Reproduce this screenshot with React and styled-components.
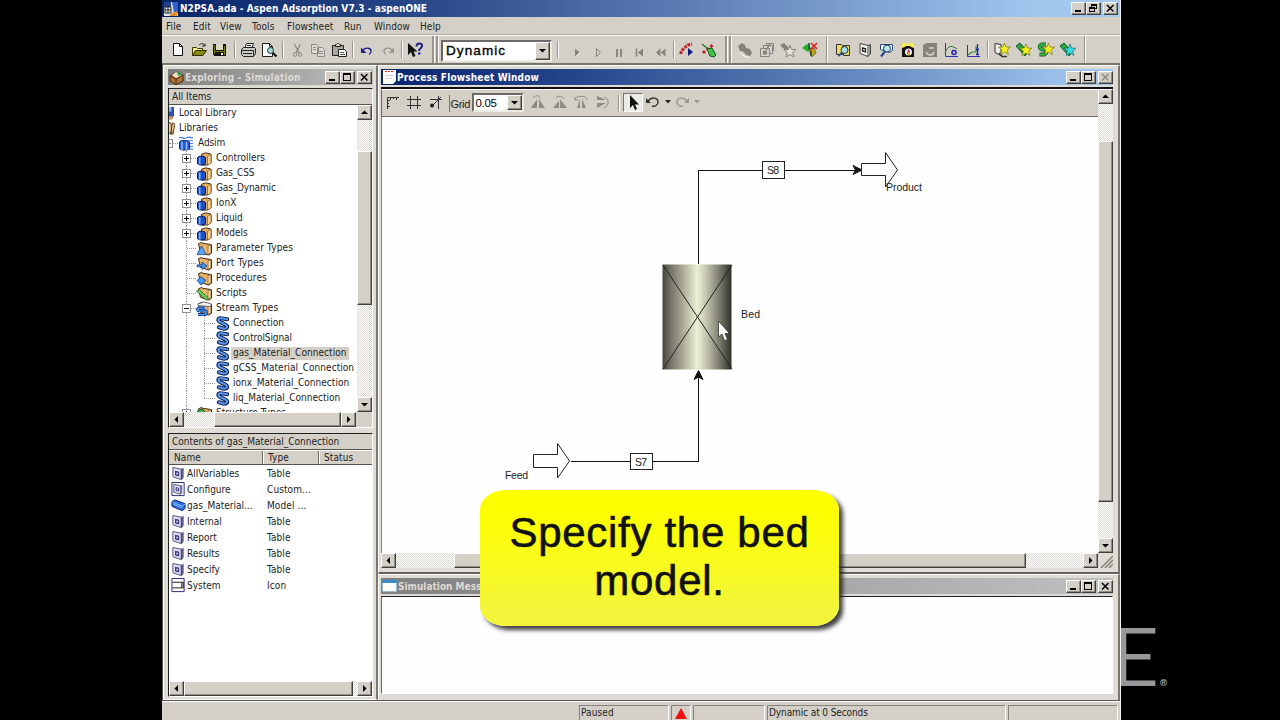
import React from 'react';
import styled, { createGlobalStyle, css } from 'styled-components';

const FACE = '#d4d0c8';
const UI = '"DejaVu Sans Condensed", "DejaVu Sans", "Liberation Sans", sans-serif';

const Global = createGlobalStyle`
  * { box-sizing: border-box; }
  html, body { margin: 0; background: #000; overflow: hidden; }
  svg { display: block; flex: none; }
`;

const Screen = styled.div`
  position: relative;
  width: 1280px;
  height: 720px;
  padding-left: 162px;
  display: flex;
  background: #000;
  overflow: hidden;
  font: 10px/15px ${UI};
  color: #222;
  white-space: nowrap;
`;

const AppWindow = styled.div`
  position: relative;
  z-index: 1;
  width: 959px;
  height: 720px;
  background: ${FACE};
  border-right: 1px solid #f4f4f0;
  display: flex;
  flex-direction: column;
`;

const Text = styled.span`
  letter-spacing: ${(p) => p.$track || 0}px;
`;

const gradients = {
  main: 'linear-gradient(90deg,#0a246a 0%,#2a4a8a 28%,#6a8cc0 62%,#a2c8f0 92%,#a6caf0 100%)',
  active: 'linear-gradient(90deg,#0a2470 0%,#23438a 25%,#5b7fb8 60%,#9fc5ee 95%)',
  idle: 'linear-gradient(90deg,#808080,#c0c0c0)',
};

const TitleBar = styled.div`
  height: ${(p) => p.$h || 16}px;
  flex: none;
  display: flex;
  align-items: center;
  padding: 0 ${(p) => p.$pr || 0}px 0 1px;
  background: ${(p) => gradients[p.$tone]};
  color: ${(p) => (p.$tone === 'idle' ? '#dedad2' : '#fff')};
  font-weight: bold;
  overflow: hidden;
`;

const TitleText = styled.span`
  flex: 1;
  margin-left: ${(p) => (p.$ml === undefined ? 1 : p.$ml)}px;
  letter-spacing: ${(p) => p.$track || 0}px;
`;

const bevel = css`
  background: ${FACE};
  border: 1px solid;
  border-color: #fff #404040 #404040 #fff;
  box-shadow: inset -1px -1px 0 #908c84;
`;

const CapButton = styled.span`
  ${bevel}
  width: 15px;
  height: 13px;
  margin-left: ${(p) => p.$gap || 0}px;
  display: flex;
  align-items: center;
  justify-content: center;
  color: ${(p) => (p.$dim ? '#8a8a86' : '#000')};
`;

function CapButtons({ restore, dim }) {
  return (
    <>
      <CapButton>
        <svg width="11" height="9" shapeRendering="crispEdges"><path d="M2 6h6v2H2z" /></svg>
      </CapButton>
      <CapButton>
        {restore ? (
          <svg width="11" height="9" shapeRendering="crispEdges">
            <path d="M3.5 3V0.5h5v4H7M3 1h6" fill="none" stroke="#000" />
            <path d="M1.5 3.5h5v4h-5zM1 4h6" fill="none" stroke="#000" />
          </svg>
        ) : (
          <svg width="11" height="9" shapeRendering="crispEdges">
            <path d="M1.5 .5h7v7h-7zM1 1.5h8" fill="none" stroke="#000" />
          </svg>
        )}
      </CapButton>
      <CapButton $gap={2} $dim={dim}>
        <svg width="11" height="9"><path d="M2 1l6.500 6.500M8.500 1L2 7.500" stroke="currentColor" strokeWidth="1.500" /></svg>
      </CapButton>
    </>
  );
}

const MenuBar = styled.div`
  height: 18px;
  flex: none;
  display: flex;
  align-items: center;
  padding: 2px 0 0 4px;
  border-bottom: 1px solid #b4b0a8;
`;

const MenuItem = styled.span`
  width: ${(p) => p.$w}px;
  letter-spacing: 0.1px;
`;

const ToolBar = styled.div`
  height: 30px;
  flex: none;
  display: flex;
  align-items: center;
  padding-left: 5px;
  border-top: 1px solid #fff;
  border-bottom: 2px solid #77746e;
`;

const ToolGroup = styled.div`
  width: ${(p) => p.$w}px;
  height: 100%;
  display: flex;
`;

const Tool = styled.span`
  flex: 1;
  display: flex;
  align-items: center;
  justify-content: center;
`;

const SepSlot = styled.span`
  width: ${(p) => p.$w}px;
  height: ${(p) => (p.$tall ? '100%' : '17px')};
  padding-left: ${(p) => p.$at}px;
  display: flex;
  gap: 1px;
  &::before, &::after {
    content: '';
    width: ${(p) => (p.$twin ? 2 : 1)}px;
    background: #98948c;
    border-right: ${(p) => (p.$twin ? '1px solid #fff' : 'none')};
  }
  &::after { background: ${(p) => (p.$twin ? '#98948c' : '#fff')}; margin-left: ${(p) => (p.$twin ? 0 : -1)}px; }
`;

const Combo = styled.div`
  width: ${(p) => p.$w}px;
  height: ${(p) => p.$h}px;
  margin-top: ${(p) => p.$mt || 0}px;
  background: #fff;
  border: 2px solid;
  border-color: #6c6a66 #eceae4 #eceae4 #6c6a66;
  display: flex;
  align-items: stretch;
  color: #000;
`;

const ComboValue = styled.span`
  flex: 1;
  padding-left: ${(p) => p.$pl}px;
  align-self: center;
  font: ${(p) => p.$size}px "Liberation Sans", sans-serif;
  letter-spacing: ${(p) => p.$track}px;
  -webkit-text-stroke: ${(p) => (p.$heavy ? '0.350px #000' : '0')};
`;

const ArrowButton = styled.span`
  ${bevel}
  width: 15px;
  height: ${(p) => (p.$fill ? 'auto' : '15px')};
  flex: none;
  display: flex;
  align-items: center;
  justify-content: center;
`;

const arrows = {
  up: 'M0 5h7L3.500 1.500z',
  down: 'M0 2h7L3.500 5.500z',
  left: 'M5 0v7L1.500 3.500z',
  right: 'M2 0v7L5.500 3.500z',
};

const Arrow = ({ dir }) => (
  <svg width="7" height="7"><path d={arrows[dir]} /></svg>
);

const ScrollBar = styled.div`
  flex: none;
  display: flex;
  flex-direction: ${(p) => (p.$v ? 'column' : 'row')};
  width: ${(p) => (p.$v ? '15px' : 'auto')};
  height: ${(p) => (p.$v ? 'auto' : '15px')};
  background: repeating-conic-gradient(#fff 0 25%, #dcd9d2 0 50%) 0 0 / 2px 2px;
`;

const Thumb = styled.span`
  ${bevel}
  flex: none;
  margin: ${(p) => (p.$v ? `${p.$at}px 0 auto` : `0 auto 0 ${p.$at}px`)};
  width: ${(p) => (p.$v ? 'auto' : `${p.$len}px`)};
  height: ${(p) => (p.$v ? `${p.$len}px` : 'auto')};
`;

function Scroll({ v, at, len }) {
  return (
    <ScrollBar $v={v}>
      <ArrowButton><Arrow dir={v ? 'up' : 'left'} /></ArrowButton>
      <Thumb $v={v} $at={at} $len={len} />
      <ArrowButton><Arrow dir={v ? 'down' : 'right'} /></ArrowButton>
    </ScrollBar>
  );
}

/* ---------- toolbar icons ---------- */

const Icon = ({ children, w = 18, h = 18, crisp }) => (
  <svg width={w} height={h} viewBox={`0 0 ${w} ${h}`} fill="none" shapeRendering={crisp ? 'crispEdges' : 'auto'}>{children}</svg>
);

const star = 'M0 -6L1.600 -2L6 -1.800L2.600 1L4 5.500L0 3L-4 5.500L-2.600 1L-6 -1.800L-1.600 -2Z';

const icons = {
  fresh: <Icon><path d="M4.500 2.500h6l3 3v9h-9z" fill="#fff" stroke="#111" /><path d="M10.500 2.500v3h3" stroke="#111" /></Icon>,
  open: <Icon><path d="M2.500 14.500v-8h4l1 1h5v3" fill="#f4f08a" stroke="#3c3c00" /><path d="M2.500 14.500l3-5h11l-3.500 5z" fill="#8a8a10" stroke="#2c2c00" /><path d="M9 4c2-2 4-2 6 1m0-2.500V5h-3" stroke="#222" /></Icon>,
  save: <Icon crisp><path d="M2 3h13v12H3l-1-1z" fill="#111" /><path d="M5 3h7v6H5z" fill="#d8d8c8" /><path d="M3 4h1v9H3zM13 5h1v9h-1zM3 10h11v1H3z" fill="#7a7a10" /><path d="M10 12h2v2h-2z" fill="#fff" /></Icon>,
  print: <Icon><path d="M6 7l1.500-4.500h7L13 7" fill="#fff" stroke="#222" /><path d="M2.500 8.500l2-2h11l1 1v5l-2 3h-10l-2-2z" fill="#c9c9c2" stroke="#222" /><path d="M2.500 9.500h12v5M4 12.500h9M8 4.500h4" stroke="#222" /></Icon>,
  preview: <Icon><path d="M2.500 2.500h7l3 3v10h-10z" fill="#fff" stroke="#222" /><path d="M9.500 2.500v3h3" stroke="#222" /><circle cx="10.500" cy="9.500" r="3" fill="#9fdcdc" stroke="#233" /><path d="M13 12l3.500 3.500" stroke="#111" strokeWidth="2" /></Icon>,
  cut: <Icon><path d="M6.500 3l4.500 9M12.500 3L8 12" stroke="#8c8a84" strokeWidth="1.300" /><circle cx="7" cy="13.500" r="1.800" stroke="#8c8a84" /><circle cx="12" cy="13.500" r="1.800" stroke="#8c8a84" /></Icon>,
  copy: <Icon><path d="M2.500 3.500h5l2 2v7h-7zM8.500 6.500h5l2 2v7h-7z" fill="#dedbd4" stroke="#8c8a84" /><path d="M4 6.500h3M4 8.500h3M10 10.500h4M10 12.500h4" stroke="#8c8a84" /></Icon>,
  paste: <Icon><path d="M2.500 4.500h11v10h-11z" fill="#a9a79e" stroke="#222" /><path d="M5.500 5.500v-2h1l1-1h1l1 1h1v2z" fill="#ddd" stroke="#222" /><path d="M8.500 8.500h6l2 2v5h-8z" fill="#fff" stroke="#222" /><path d="M10 11.500h4M10 13.500h5" stroke="#555" /></Icon>,
  undo: <Icon><path d="M5 9c3-3 8-2 8 1 0 2-1 3-2 3.500" stroke="#20208c" strokeWidth="1.300" /><path d="M3 6.500v5.500h5.500z" fill="#20208c" /></Icon>,
  redo: <Icon><path d="M13 9c-3-3-8-2-8 1 0 2 1 3 2 3.500" stroke="#9a978f" strokeWidth="1.300" /><path d="M15 6.500v5.500H9.500z" fill="#9a978f" /></Icon>,
  help: <Icon><path d="M2 2v12l3-3 2 5 2.500-1-2-4.500h4z" fill="#111" /><path d="M10.500 5.500c0-4 6-4 5.500-.5 0 2.500-3 2-3 5M12 12.500h2.500" stroke="#20208c" strokeWidth="2" /></Icon>,
  play: <Icon><path d="M7 7.500v8l4.500-4z" fill="#85827c" /><path d="M7.500 16l4.500-4.500" stroke="#fff" strokeWidth=".8" /></Icon>,
  step: <Icon><path d="M7.500 7.500v8l4-4z" stroke="#85827c" /></Icon>,
  pause: <Icon crisp><path d="M6 8h2v8H6zM10 8h2v8h-2z" fill="#8c8982" /></Icon>,
  restart: <Icon><path d="M5.500 7.500v8" stroke="#85827c" strokeWidth="1.500" /><path d="M12 7.500v8l-5-4z" fill="#85827c" /></Icon>,
  rewind: <Icon><path d="M8.500 7.500v8l-4.500-4zM13.500 7.500v8l-4.500-4z" fill="#85827c" /></Icon>,
  traceRun: <Icon><path d="M3 13v-2l3-4 4-3 4-1" stroke="#c22020" strokeWidth="3" strokeDasharray="2.800 1" /><path d="M10 7v8l5-4z" fill="#101880" /></Icon>,
  traceDel: <Icon><path d="M3 12l2-2 9-7" stroke="#c22020" strokeWidth="3" strokeDasharray="2.800 2" /><path d="M2 3l11 9" stroke="#2d7a30" strokeWidth="1.500" /><path d="M7 8l5-1 4 7-2 2-4-1z" fill="#45c04a" stroke="#14551a" /></Icon>,
  grayBlock: <Icon><path d="M2 5l4-3 3 2 1 3 4 1 2 4-2 3-4-1-2-3-4-1z" fill="#85827c" /><path d="M4 12l4 3 5 1.500" stroke="#fff" /></Icon>,
  grayStack: <Icon><path d="M2.500 7.500h9v8h-9zM5.500 7V4.500h9v8H12M8.500 4V2.500h7v7H15" fill="#d7d3cc" stroke="#85827c" /><path d="M5 9.500h4v4H5z" fill="#85827c" /><path d="M12 3l-4 6" stroke="#85827c" strokeWidth="1.500" /></Icon>,
  grayStar: <Icon><path d="M1 4l4-2 5 5-3 3z" fill="#85827c" /><path d={star} transform="translate(11 10.500)" fill="#e6e3dc" stroke="#85827c" /></Icon>,
  netDel: <Icon><path d="M1 7l5-4 4 4-3 4z" fill="#22b02a" /><path d="M8 9l5-2 2 5-4 4z" fill="#c3a11c" stroke="#553" strokeWidth=".7" /><path d="M8 2v6m2 2v5" stroke="#144" strokeWidth="1.500" /><path d="M10 2l6 6M16 2l-7 7" stroke="#e02020" strokeWidth="1.700" /></Icon>,
  explorer: <Icon><path d="M2.500 3.500h5l1 1v9h-6zM9.500 4.500h6v10h-6z" fill="#eadf55" stroke="#333" /><circle cx="10.500" cy="9" r="3.500" fill="#a5dff0" stroke="#333" /><path d="M8 11.500L4.500 15" stroke="#2a4b9c" strokeWidth="2" /></Icon>,
  form: <Icon><path d="M4 2.500l8 2v11l-8-3z" fill="#f4f4ee" stroke="#444" /><path d="M12 4.500l2.500-1v9.500L12 15" fill="#999" stroke="#444" /><path d="M6.500 7l3 .8v3L6.500 10z" stroke="#222" strokeWidth="1.300" /></Icon>,
  find: <Icon><path d="M3.500 3.500h12v6l-3 2-9-3z" fill="#dff" stroke="#2b4c78" /><circle cx="10" cy="7.500" r="3.500" fill="#b9e6f6" stroke="#234" /><path d="M8 10.500l-4 5" stroke="#2a4b9c" strokeWidth="2.200" /></Icon>,
  camera: <Icon><path d="M3 2h3l1 1.500L9 1l2 2.500L12 2h3v5H3z" fill="#f5ec50" /><path d="M3 7l3-1 1-1h4l1 1 3 1v9H3z" fill="#111" /><circle cx="9.500" cy="11" r="3.500" fill="#eee" /><path d="M9 8l2 2-1 4-2-1z" fill="#c0208a" /><path d="M9 11h2v3H9z" fill="#e0b020" /></Icon>,
  grayCam: <Icon><path d="M2 4l4-2h10v14H2z" fill="#85827c" /><path d="M5 11c2 4 7 4 8 0M8 7h5" stroke="#d8d4cc" strokeWidth="1.500" /></Icon>,
  plotO: <Icon><path d="M3.500 2v13.500H16" stroke="#3030b0" /><path d="M3 12c3-9 8-7 12-4" stroke="#30702f" /><circle cx="12" cy="11.500" r="2" stroke="#2020b0" strokeWidth="1.500" /></Icon>,
  plotT: <Icon><path d="M3.500 4v11.500H16" stroke="#3030b0" /><path d="M4 14l4-3h4V5" stroke="#30902f" strokeWidth="1.200" /><path d="M13.500 3v11M12 8.500h3M12 13.500h3" stroke="#2020b0" strokeWidth="1.300" /></Icon>,
  newForm: <Icon><path d="M2 2.500l6 1v11l-6-3z" fill="#eee" stroke="#333" /><path d="M6 12l3 3.500h5" stroke="#333" strokeWidth="1.500" /><path d={star} transform="translate(11.500 8) " fill="#f7f020" stroke="#655f00" strokeWidth=".6" /></Icon>,
  newModel: <Icon><path d="M1 5l4-3 8 9-3 4z" fill="#29a835" stroke="#153" /><path d={star} transform="translate(11 9)" fill="#f7f020" stroke="#655f00" strokeWidth=".6" /></Icon>,
  newStream: <Icon><path d="M9 3.500H5c-4 1-2 5 1 5s5 3 1 5H2.500" stroke="#153" strokeWidth="4" /><path d="M9 3.500H5c-4 1-2 5 1 5s5 3 1 5H2.500" stroke="#2fb03c" strokeWidth="2.600" /><path d={star} transform="translate(11.500 8)" fill="#f7f020" stroke="#655f00" strokeWidth=".6" /></Icon>,
  newPort: <Icon><path d="M1 5l4-3 8 9-3 4z" fill="#29a835" stroke="#153" /><path d={star} transform="translate(11 9)" fill="#35d9e8" stroke="#125a66" strokeWidth=".6" /></Icon>,
};

const toolbar = [
  { w: 64, tools: ['fresh', 'open', 'save'] }, { sep: 6, at: 3 },
  { w: 42, tools: ['print', 'preview'] }, { sep: 7, at: 3 },
  { w: 64, tools: ['cut', 'copy', 'paste'] }, { sep: 6, at: 2 },
  { w: 43, tools: ['undo', 'redo'] }, { sep: 5, at: 2 },
  { w: 22, tools: ['help'] }, { sep: 15, at: 6, twin: true },
  { combo: true }, { sep: 14, at: 5 },
  { w: 106, tools: ['play', 'step', 'pause', 'restart', 'rewind'] }, { sep: 4, at: 1 },
  { w: 44, tools: ['traceRun', 'traceDel'] }, { sep: 14, at: 5, twin: true },
  { w: 87, tools: ['grayBlock', 'grayStack', 'grayStar', 'netDel'] }, { sep: 11, at: 5, tall: true },
  { w: 152, tools: ['explorer', 'form', 'find', 'camera', 'grayCam', 'plotO', 'plotT'] }, { sep: 7, at: 3 },
  { w: 88, tools: ['newForm', 'newModel', 'newStream', 'newPort'] }, { sep: 11, at: 5, tall: true },
];

/* ---------- panels ---------- */

const Workspace = styled.div`
  height: 636px;
  flex: none;
  display: flex;
  border-left: 1px solid #55534f;
  border-bottom: 1px solid #55534f;
`;

const Explorer = styled.div`
  width: 215px;
  flex: none;
  padding: 3px 3px 2px 4px;
  background: #dedcd5;
  border: 1px solid;
  border-width: 1px 2px 1px 1px;
  border-color: #fff #7a7771 #fff #fff;
  display: flex;
  flex-direction: column;
`;

const Pane = styled.div`
  height: ${(p) => p.$h}px;
  margin-top: ${(p) => p.$mt}px;
  flex: none;
  border: 1px solid;
  border-color: #222 #fff #fff #222;
  background: #fff;
  display: flex;
  flex-direction: column;
  overflow: hidden;
`;

const PaneHeader = styled.div`
  height: 16px;
  flex: none;
  padding-left: 3px;
  background: ${FACE};
  border-bottom: 1px solid #55534f;
  line-height: 16px;
`;

const PaneRow = styled.div`
  display: flex;
  flex: 1;
  min-height: 0;
`;

const Tree = styled.div`
  flex: 1;
  min-width: 0;
  padding-top: 1px;
  overflow: hidden;
`;

const TreeRow = styled.div`
  height: 15px;
  display: flex;
  align-items: center;
  padding-left: ${(p) => p.$indent}px;
`;

const NodeLabel = styled.span`
  height: 13px;
  line-height: 12px;
  margin-left: ${(p) => (p.$gap === undefined ? 2 : p.$gap)}px;
  padding: 0 2px;
  background: ${(p) => (p.$on ? FACE : 'transparent')};
  letter-spacing: ${(p) => p.$track || 0}px;
`;

const Can = () => (
  <>
    <path d="M5.500 3.500l4-1.500 5 1 .5 1v8.500l-4 2.500h-5z" fill="#e9b060" stroke="#3c2408" />
    <path d="M11.500 5.500l3.500-2v9.500l-3.500 2z" fill="#f7cf8f" stroke="#6a4010" strokeWidth=".6" />
    <path d="M1.500 7c1-2 7-2 8 0v6.500c-1 2-7 2-8 0z" fill="#1e50c8" stroke="#061a58" />
    <path d="M3.700 7v7.500" stroke="#7fb0ff" strokeWidth="1.600" />
  </>
);

const Folder = () => (
  <>
    <path d="M2.500 3l3-1.500 1.500 1 6.500 1 2 .5v9l-3 2-8-3z" fill="#eab566" stroke="#3c2408" />
    <path d="M12 5l3-1v8.500l-3 2z" fill="#f9d79c" stroke="#6a4010" strokeWidth=".6" />
  </>
);

const treeArt = {
  globe: <><path d="M0 1h5v9l-2 4H0z" fill="#2b4ec8" /><path d="M0 1h2.500v5H0z" fill="#8fb2ef" /><path d="M0 11h4l-1 3H0z" fill="#e09a30" /></>,
  books: <path d="M0 2h2l1 11H0M3.500 2l2.500 1-2 11H1.500z" fill="#f3cf96" stroke="#4c2c10" strokeWidth=".9" />,
  adsim: <><path d="M1 2c3-2 4 2 7 0s4 0 7 0M2 5h13M11 8h4m-4 3h4m-5 3h5" stroke="#4a7fe8" strokeWidth="1.200" fill="none" /><path d="M1.500 6.500c1-2 9-2 10 0v7c-1 2-9 2-10 0z" fill="#2458d4" stroke="#0a2470" /><path d="M4 6v9M8.500 6v9" stroke="#8ec0ff" strokeWidth="1.500" /></>,
  can: <Can />,
  param: <><Folder /><path d="M5.500 5L1 14.500h9z" fill="#55a6f5" stroke="#17428e" strokeWidth=".8" /></>,
  port: <><Folder /><path d="M1 9.500h5V6.500l5 4-5 4v-3H1z" fill="#3f95f0" stroke="#123f90" strokeWidth=".8" /></>,
  proc: <><Folder /><path d="M1 10l4-4 5 4-5 5z" fill="#3f95f0" stroke="#123f90" strokeWidth=".8" /></>,
  script: <><Folder /><path d="M0.500 5.500l3-1.500 9 9-2 2z" fill="#66cf5a" stroke="#1d6a20" strokeWidth=".8" /></>,
  streams: <><Folder /><path d="M2 3l6-2 7 2v3L2 5z" fill="#f2f2ee" stroke="#444" strokeWidth=".8" /><path d="M9 7.500H4c-3 0-3 3 0 3h4c3 0 3 4 0 4H2" stroke="#103a90" strokeWidth="3.200" fill="none" /><path d="M9 7.500H4c-3 0-3 3 0 3h4c3 0 3 4 0 4H2" stroke="#58a0f0" strokeWidth="1.400" fill="none" /></>,
  stream: <><path d="M12 3.500L6.500 2.500C2.500 2 3 5.500 5 6.500l5 2.500c3.500 2 2 4.500-1 4.500L4 12" stroke="#0b1c50" strokeWidth="4.200" fill="none" strokeLinecap="round" /><path d="M12 3.500L6.500 2.500C2.500 2 3 5.500 5 6.500l5 2.500c3.500 2 2 4.500-1 4.500L4 12" stroke="#5c98ea" strokeWidth="2.200" fill="none" strokeLinecap="round" /></>,
  struct: <><Folder /><path d="M1 6l5-3 5 5-4 5z" fill="#3fb545" stroke="#143" /></>,
};

const TreeIcon = ({ kind, w = 16 }) => (
  <svg width={w} height="15" viewBox={`0 0 ${w} 16`} fill="none" preserveAspectRatio="none">{treeArt[kind]}</svg>
);

function Branch({ sign, last, deep }) {
  const dash = { stroke: '#9a9a9a', strokeDasharray: '1 1', fill: 'none' };
  return (
    <svg width={deep ? 17 : 18} height="15" shapeRendering="crispEdges">
      {deep ? (
        <path d={`M6.500 0V${last ? 8 : 15}M6 7.500H17`} {...dash} />
      ) : (
        <path d="M8.500 0V15M9 7.500H18" {...dash} />
      )}
      {sign && <rect x="4.500" y="3.500" width="8" height="8" fill="#fff" stroke="#8e8e8e" />}
      {sign && <path d={sign === '+' ? 'M6 7.500h5M8.500 5v5' : 'M6 7.500h5'} stroke="#111" />}
    </svg>
  );
}

const folders = [
  ['Controllers', 'can', '+'], ['Gas_CSS', 'can', '+', -0.15], ['Gas_Dynamic', 'can', '+', -0.15],
  ['IonX', 'can', '+', 0.15], ['Liquid', 'can', '+', -0.1], ['Models', 'can', '+'],
  ['Parameter Types', 'param', '', 0.15], ['Port Types', 'port', '', 0.2], ['Procedures', 'proc', '', 0.1],
  ['Scripts', 'script', ''], ['Stream Types', 'streams', '-', 0.15],
];

const streams = [
  ['Connection', 0], ['ControlSignal', -0.1], ['gas_Material_Connection', 0.05],
  ['gCSS_Material_Connection', 0.05], ['ionx_Material_Connection', 0.03], ['liq_Material_Connection', 0],
];

const HeadRow = styled.div`
  height: 15px;
  flex: none;
  display: flex;
  background: ${FACE};
  border-top: 1px solid #fff;
  border-bottom: 1px solid #55534f;
`;

const HeadCell = styled.span`
  width: ${(p) => p.$w}px;
  padding-left: 5px;
  line-height: 14px;
  letter-spacing: 0.100px;
  border-right: ${(p) => (p.$end ? 'none' : '1px solid #6f6c66')};
  box-shadow: ${(p) => (p.$end ? 'none' : '1px 0 0 #fff')};
`;

const ListRow = styled.div`
  height: 16px;
  flex: none;
  display: flex;
  align-items: center;
  padding-left: 2px;
`;

const ListName = styled.span`
  width: 81px;
  padding-left: 1px;
`;

const Spacer = styled.div`
  flex: 1;
`;

const listArt = {
  sheet: <><path d="M1.500 1.500l9 2v11l-9-3z" fill="#dcdcf6" stroke="#50507a" /><path d="M10.500 3.500l2-1v10l-2 2z" fill="#7070a0" stroke="#303058" strokeWidth=".7" /><path d="M4.500 6l3 .7v3.500l-3-.7z" stroke="#303070" strokeWidth="1.300" /></>,
  boxed: <><path d="M.5.500h13v14H.5z" stroke="#20207a" fill="#fff" /><path d="M2.500 2.500l7 1.500v9l-7-2z" fill="#dcdcf6" stroke="#50507a" /><path d="M9.500 4l2-1v9l-2 1.500z" fill="#7070a0" /><path d="M5 6l2.500.7v2.800L5 9z" stroke="#303070" /></>,
  brick: <><path d="M.5 4l3-2 11 4v5l-3 2.500L.5 9z" fill="#2b6be0" stroke="#0b2068" /><path d="M1 4.500l10.500 4 3-2M2 6.500l9.500 4" stroke="#8fc0ff" /></>,
  system: <><path d="M.5.500h13v14H.5z" stroke="#20207a" fill="#fff" /><path d="M1 4.500h12M1 10.500h12" stroke="#111" /><path d="M11 5v5M12.500 5v5" stroke="#111" /></>,
};

const list = [
  ['AllVariables', 'Table', 'sheet'], ['Configure', 'Custom...', 'boxed'], ['gas_Material...', 'Model ...', 'brick'],
  ['Internal', 'Table', 'sheet'], ['Report', 'Table', 'sheet'], ['Results', 'Table', 'sheet'],
  ['Specify', 'Table', 'sheet'], ['System', 'Icon', 'system'],
];

const Documents = styled.div`
  flex: 1;
  min-width: 0;
  display: flex;
  flex-direction: column;
`;

const ChildWindow = styled.div`
  height: ${(p) => p.$h}px;
  flex: none;
  padding: ${(p) => p.$pt || 3}px 5px 0 2px;
  background: #dedcd5;
  border-top: 1px solid #fff;
  border-left: 1px solid #fff;
  border-right: 2px solid #7a7771;
  border-bottom: ${(p) => (p.$last ? 0 : 2)}px solid #66635e;
  display: flex;
  flex-direction: column;
`;

const FlowBody = styled.div`
  height: 481px;
  margin-top: 2px;
  display: flex;
  flex-direction: column;
  border-top: 2px solid #111;
`;

const FlowMain = styled.div`
  flex: 1;
  display: flex;
  min-height: 0;
`;

const FlowLeft = styled.div`
  width: 717px;
  display: flex;
  flex-direction: column;
`;

const FlowTools = styled.div`
  height: 28px;
  flex: none;
  display: flex;
  align-items: center;
  background: ${FACE};
  border-bottom: 1px solid #6c6963;
  border-left: 1px solid #6c6963;
  border-top: 1px solid #fff;
`;

const FlowTool = styled.span`
  width: ${(p) => p.$w || 21.5}px;
  height: 19px;
  margin-top: -2px;
  display: flex;
  align-items: center;
  justify-content: center;
  background: ${(p) => (p.$on ? '#ecebe6' : 'transparent')};
  border: ${(p) => (p.$on ? '1px solid' : '0')};
  border-color: #77746e #fff #fff #77746e;
`;

const GridLabel = styled.span`
  width: 23px;
  height: 17px;
  padding-left: 1px;
  font: 11px/19px "Liberation Sans", sans-serif;
  letter-spacing: -0.300px;
  border-left: 1px solid #77746e;
`;

const Canvas = styled.svg`
  width: 717px;
  height: 436px;
  background: #fefefe;
  border-left: 1px solid #8a8781;
  font: 10.500px "Liberation Sans", sans-serif;
`;

const BottomRow = styled.div`
  height: 15px;
  flex: none;
  display: flex;
  & > :first-child { width: 717px; }
`;

const Messages = styled.div`
  height: 98px;
  margin-top: 2px;
  background: #fefefe;
  border: 1px solid;
  border-color: #222 #fff #fff #6c6963;
`;

const Status = styled.div`
  flex: 1;
  display: flex;
  padding-top: 3px;
  padding-left: 417px;
  border-top: 1px solid #fff;
  line-height: 14px;
`;

const StatusCell = styled.span`
  width: ${(p) => p.$w}px;
  margin-right: 2px;
  padding-left: 1px;
  letter-spacing: ${(p) => p.$track || 0}px;
  border-top: 1px solid #85827c;
  border-left: 1px solid #85827c;
  border-right: 1px solid #fff;
`;

const Callout = styled.div`
  position: absolute;
  z-index: 2;
  left: 480px;
  top: 490px;
  width: 359px;
  height: 136px;
  padding-top: 19px;
  border-radius: 26px / 20px;
  background: linear-gradient(#ffff00 15%, #f2f53a 90%);
  box-shadow: 4px 4px 4px rgba(30, 30, 30, 0.85);
  color: #111;
  font: 42px/48px "Liberation Sans", sans-serif;
  letter-spacing: 0.700px;
  -webkit-text-stroke: 0.600px #111;
  text-align: center;
  white-space: normal;
`;

const Brand = styled.div`
  position: absolute;
  left: 1113px;
  top: 615px;
  display: flex;
  align-items: flex-end;
  color: #98979a;
  font: 300 78px/80px Lato, "Open Sans", sans-serif;
  -webkit-text-stroke: 2.200px #98979a;
`;

const Mark = styled.span`
  font: 9px/12px "Liberation Sans", sans-serif;
  -webkit-text-stroke: 0.300px #98979a;
  padding: 0 0 6px 2px;
`;

function FlowDiagram() {
  return (
    <Canvas viewBox="382 117 716 436">
      <defs>
        <linearGradient id="steel">
          <stop offset="0" stopColor="#44443c" />
          <stop offset=".12" stopColor="#74746a" />
          <stop offset=".3" stopColor="#acac98" />
          <stop offset=".5" stopColor="#ecefd4" />
          <stop offset=".62" stopColor="#c9cab4" />
          <stop offset=".82" stopColor="#7e7e70" />
          <stop offset="1" stopColor="#2e2e28" />
        </linearGradient>
      </defs>
      <g fill="none" stroke="#111" shapeRendering="crispEdges">
        <path d="M698.500 264V170.500H860" />
        <path d="M571 461.500H698.500V372" />
      </g>
      <path d="M862 170l-9-4.500 2.500 4.500-2.500 4.500z" fill="#111" stroke="#111" />
      <path d="M698.500 370.500l-4.500 9 4.500-2.500 4.500 2.500z" fill="#111" stroke="#111" />
      <g fill="#fff" stroke="#222">
        <path d="M861.500 163.500h24v-11l12 17.500-12 17v-11.500h-24z" />
        <path d="M533.500 454.500h24v-11l12 17.500-12 17v-10.500h-24z" />
        <path d="M762.500 161.500h22v17h-22zM630.500 453.500h22v16h-22z" shapeRendering="crispEdges" />
      </g>
      <rect x="662.500" y="264.500" width="69" height="105" fill="url(#steel)" />
      <path d="M663 265l69 104M732 265l-69 104" stroke="#222" />
      <g fill="#222">
        <text x="767" y="174" textLength="12">S8</text>
        <text x="635" y="466" textLength="12">S7</text>
        <text x="886" y="191" textLength="36">Product</text>
        <text x="741" y="318" textLength="19">Bed</text>
        <text x="505" y="479" textLength="23">Feed</text>
      </g>
      <path d="M718.500 321v16l3.500-3 2.500 6.500 3-1-2.500-6h4.500z" fill="#fff" stroke="#333" strokeWidth=".8" />
    </Canvas>
  );
}

const flowIcons = {
  ruler: <path d="M3.500 16V4.500H15M3 7.500h3M3 10.500h2M3 13.500h3M6.500 4v3M9.500 4v2M12.500 4v3" stroke="#333" />,
  hash: <path d="M5.500 3v13M12.500 3v13M2 6.500h14M2 12.500h14" stroke="#333" />,
  snap: <><path d="M3 6.500h12M11.500 3v13M5 13l9-9" stroke="#333" /><circle cx="5" cy="12.500" r="2" fill="#222" /></>,
  flipA: <><path d="M2 15h6V6zM10 15h6l-6-9z" fill="#8e8b84" /><path d="M4 5c2-3 6-3 7 0" stroke="#8e8b84" /></>,
  flipB: <><path d="M2 15h6V8zM9 15h7l-7-9z" fill="#8e8b84" /><path d="M5 5c2-3 7-2 8 1" stroke="#8e8b84" /></>,
  flipC: <><path d="M5 15h3V6zM10 15h4l-4-9z" fill="#8e8b84" /><path d="M3 7c0-5 12-5 12 0M3 4v3h3" stroke="#8e8b84" /></>,
  flipD: <><path d="M3 3l9 4H3zM3 15l9-5H3z" fill="#8e8b84" /><path d="M10 4c5 1 6 8 0 11" stroke="#8e8b84" /></>,
  pointer: <path d="M6 2v13l3-3 2 5 2-1-2-4.500h4z" fill="#111" />,
  undo: <><path d="M4 8c4-5 10-3 10 1 0 3-3 5-6 4" stroke="#333" strokeWidth="1.400" /><path d="M2 5v5h5z" fill="#333" /></>,
  redo: <><path d="M14 8c-4-5-10-3-10 1 0 3 3 5 6 4" stroke="#98958e" strokeWidth="1.400" /><path d="M16 5v5h-5z" fill="#98958e" /></>,
};

const FlowIcon = ({ n }) => <Icon>{flowIcons[n]}</Icon>;
const Caret = ({ dim }) => <svg width="6" height="4"><path d="M0 0h6L3 3.500z" fill={dim ? '#98958e' : '#222'} /></svg>;

const CornerRow = styled.div`
  height: 15px;
  flex: none;
  display: flex;
  background: ${FACE};
  & > :first-child { width: ${(p) => p.$w}px; }
`;

export default function App() {
  return (
    <Screen>
      <Global />
      <AppWindow>
        <TitleBar $tone="main" $h={17} $pr={2}>
          <svg width="16" height="16">
            <path d="M1 1h14v14H1z" fill="#dfe4ee" />
            <path d="M9 1h6v11h-4z" fill="#2c5fd0" /><path d="M1 1h7v5H1z" fill="#25408a" />
            <path d="M2 6h6v6H2z" fill="#eee" stroke="#222" /><path d="M5 6v6M2 9h6" stroke="#222" /><path d="M9 12l5-2v5H6z" fill="#e09030" />
          </svg>
          <TitleText $track={0.07}>N2PSA.ada - Aspen Adsorption V7.3 - aspenONE</TitleText>
          <CapButtons restore />
        </TitleBar>
        <MenuBar>
          {[['File', 27], ['Edit', 27], ['View', 32], ['Tools', 35], ['Flowsheet', 57], ['Run', 30], ['Window', 46], ['Help', 30]].map(([t, w]) => (
            <MenuItem key={t} $w={w}>{t}</MenuItem>
          ))}
        </MenuBar>
        <ToolBar>
          {toolbar.map((g, i) => {
            if (g.combo) {
              return (
                <Combo key={i} $w={111} $h={22} $mt={2}>
                  <ComboValue $size={13.5} $track={1.1} $pl={3} $heavy>Dynamic</ComboValue>
                  <ArrowButton $fill><Arrow dir="down" /></ArrowButton>
                </Combo>
              );
            }
            if (g.sep) return <SepSlot key={i} $w={g.sep} $at={g.at} $twin={g.twin} $tall={g.tall || g.twin} />;
            return <ToolGroup key={i} $w={g.w}>{g.tools.map((t) => <Tool key={t}>{icons[t]}</Tool>)}</ToolGroup>;
          })}
        </ToolBar>
        <Workspace>
          <Explorer>
            <TitleBar $tone="idle" $pr={1}>
              <svg width="15" height="15">
                <path d="M1 6l6-4 7 3v6l-7 4-6-4z" fill="#b07038" stroke="#4a2a10" /><path d="M1 6l6 3 7-4M7 9v6" stroke="#4a2a10" fill="none" />
                <path d="M3 5l4-3 6 3-6 3z" fill="#f3e3c0" /><path d="M8 2l3-1 1 4-3 1z" fill="#3a9a50" />
              </svg>
              <TitleText $track={0.14}>Exploring - Simulation</TitleText>
              <CapButtons />
            </TitleBar>
            <Pane $h={340} $mt={3}>
              <PaneHeader>All Items</PaneHeader>
              <PaneRow>
                <Tree>
                  <TreeRow $indent={0}><TreeIcon kind="globe" w={6} /><NodeLabel>Local Library</NodeLabel></TreeRow>
                  <TreeRow $indent={0}><TreeIcon kind="books" w={6} /><NodeLabel>Libraries</NodeLabel></TreeRow>
                  <TreeRow $indent={0}>
                    <svg width="9" height="15" shapeRendering="crispEdges"><path d="M0 3.500h3.500v8H0M0 7.500h2" stroke="#8e8e8e" fill="none" /><path d="M4 7.500h5" stroke="#9a9a9a" strokeDasharray="1 1" /></svg>
                    <TreeIcon kind="adsim" /><NodeLabel $track={-0.1}>Adsim</NodeLabel>
                  </TreeRow>
                  {folders.map(([t, k, s, tr]) => (
                    <TreeRow key={t} $indent={9}><Branch sign={s} /><TreeIcon kind={k} /><NodeLabel $track={tr}>{t}</NodeLabel></TreeRow>
                  ))}
                  {streams.map(([t, tr], i) => (
                    <TreeRow key={t} $indent={9}>
                      <svg width="20" height="15" shapeRendering="crispEdges"><path d="M8.500 0V15" stroke="#9a9a9a" strokeDasharray="1 1" /></svg>
                      <Branch deep last={i === 5} /><TreeIcon kind="stream" /><NodeLabel $gap={0} $track={tr} $on={i === 2}>{t}</NodeLabel>
                    </TreeRow>
                  ))}
                  <TreeRow $indent={9}><Branch sign="+" /><TreeIcon kind="struct" /><NodeLabel>Structure Types</NodeLabel></TreeRow>
                </Tree>
                <Scroll v at={31} len={154} />
              </PaneRow>
              <CornerRow $w={187}><Scroll at={30} len={127} /></CornerRow>
            </Pane>
            <Pane $h={264} $mt={5}>
              <PaneHeader>Contents of gas_Material_Connection</PaneHeader>
              <HeadRow>
                <HeadCell $w={94}>Name</HeadCell><HeadCell $w={56}>Type</HeadCell><HeadCell $w={52} $end>Status</HeadCell>
              </HeadRow>
              {list.map(([n, t, k]) => (
                <ListRow key={n}>
                  <svg width="15" height="15" viewBox="0 0 15 16" fill="none">{listArt[k]}</svg>
                  <ListName>{n}</ListName>
                  <Text $track={0.1}>{t}</Text>
                </ListRow>
              ))}
              <Spacer />
              <Scroll at={0} len={169} />
            </Pane>
          </Explorer>
          <Documents>
            <ChildWindow $h={509}>
              <TitleBar $tone="active">
                <svg width="15" height="16"><path d="M1 1h13v11l-3 3H1z" fill="#fff" /><path d="M3 2.500h8" stroke="#d22" strokeDasharray="2 1" /><path d="M3 6.500h8M3 9.500h7" stroke="#ccd" /></svg>
                <TitleText $ml={0} $track={0.17}>Process Flowsheet Window</TitleText>
                <CapButtons dim />
              </TitleBar>
              <FlowBody>
                <FlowMain>
                  <FlowLeft>
                    <FlowTools>
                      <FlowTool><FlowIcon n="ruler" /></FlowTool>
                      <FlowTool><FlowIcon n="hash" /></FlowTool>
                      <FlowTool><FlowIcon n="snap" /></FlowTool>
                      <FlowTool $w={2} />
                      <GridLabel>Grid</GridLabel>
                      <Combo $w={52} $h={19} $mt={-1}>
                        <ComboValue $size={11.5} $track={-0.3} $pl={2}>0.05</ComboValue>
                        <ArrowButton $fill><Arrow dir="down" /></ArrowButton>
                      </Combo>
                      <FlowTool $w={4} />
                      <FlowTool><FlowIcon n="flipA" /></FlowTool>
                      <FlowTool><FlowIcon n="flipB" /></FlowTool>
                      <FlowTool><FlowIcon n="flipC" /></FlowTool>
                      <FlowTool><FlowIcon n="flipD" /></FlowTool>
                      <SepSlot $w={9} $at={4} />
                      <FlowTool $w={20} $on><FlowIcon n="pointer" /></FlowTool>
                      <FlowTool $w={21}><FlowIcon n="undo" /></FlowTool>
                      <FlowTool $w={8}><Caret /></FlowTool>
                      <FlowTool $w={21}><FlowIcon n="redo" /></FlowTool>
                      <FlowTool $w={8}><Caret dim /></FlowTool>
                    </FlowTools>
                    <FlowDiagram />
                  </FlowLeft>
                  <Scroll v at={37} len={361} />
                </FlowMain>
                <BottomRow>
                  <Scroll at={58} len={572} />
                  <svg width="15" height="15"><path d="M15 3L3 15M15 7l-8 8M15 11l-4 4" stroke="#85827c" strokeWidth="1.500" /></svg>
                </BottomRow>
              </FlowBody>
            </ChildWindow>
            <ChildWindow $h={126} $pt={3} $last>
              <TitleBar $tone="idle">
                <svg width="15" height="14"><path d="M.5 1.500h14v11H.5z" fill="#fff" stroke="#9bc" /><path d="M0 1h15v3H0z" fill="#3a8cc8" /></svg>
                <TitleText>Simulation Messages</TitleText>
                <CapButtons />
              </TitleBar>
              <Messages />
            </ChildWindow>
          </Documents>
        </Workspace>
        <Status>
          <StatusCell $w={90} $track={0.1}>Paused</StatusCell>
          <StatusCell $w={21}>
            <svg width="16" height="14"><path d="M8 2l6 11H2z" fill="#f01010" /></svg>
          </StatusCell>
          <StatusCell $w={72} />
          <StatusCell $w={240} $track={-0.1}>Dynamic at 0 Seconds</StatusCell>
          <StatusCell $w={111} />
        </Status>
      </AppWindow>
      <Brand>E<Mark>®</Mark></Brand>
      <Callout>Specify the bed model.</Callout>
    </Screen>
  );
}
